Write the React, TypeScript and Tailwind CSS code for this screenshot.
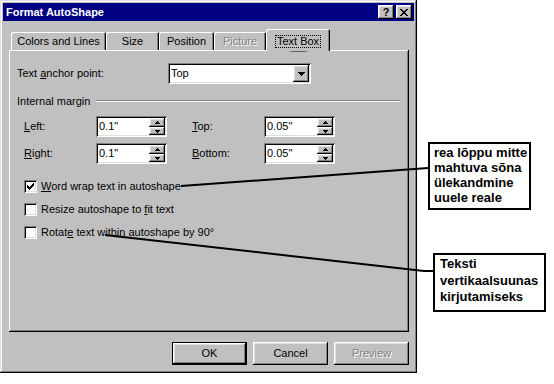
import React from "react";

const frame =
  "shadow-[inset_-1px_-1px_#000,inset_1px_1px_#dfdfdf,inset_-2px_-2px_#808080,inset_2px_2px_#fff]";
const raised =
  "shadow-[inset_-1px_-1px_#000,inset_1px_1px_#fff,inset_-2px_-2px_#808080,inset_2px_2px_#dfdfdf]";
const sunken =
  "shadow-[inset_1px_1px_#808080,inset_-1px_-1px_#fff,inset_2px_2px_#000,inset_-2px_-2px_#dfdfdf]";
const pane = "shadow-[inset_-1px_-1px_#000,inset_1px_1px_#fff,inset_-2px_-2px_#808080]";
const tabShadow =
  "shadow-[inset_1px_1px_#fff,inset_-1px_0_#000,inset_-2px_0_#808080]";

function TitleBtn({ children }: { children: React.ReactNode }) {
  return (
    <div className={`w-[16px] h-[14px] bg-[#c0c0c0] flex items-center justify-center ${raised}`}>
      {children}
    </div>
  );
}

function Tab({
  label,
  w,
  disabled,
}: {
  label: string;
  w: string;
  disabled?: boolean;
}) {
  return (
    <div
      className={`${w} h-[18px] bg-[#c0c0c0] rounded-t-[2px] flex items-center justify-center leading-[13px] ${tabShadow} ${
        disabled ? "text-[#808080] [text-shadow:1px_1px_0_#fff]" : ""
      }`}
    >
      {label}
    </div>
  );
}

function Arrow({ dir }: { dir: "up" | "down" }) {
  return (
    <svg width="5" height="3" viewBox="0 0 5 3" shapeRendering="crispEdges">
      {dir === "up" ? (
        <path d="M2 0h1v1h-1z M1 1h3v1h-3z M0 2h5v1h-5z" fill="#000" />
      ) : (
        <path d="M0 0h5v1h-5z M1 1h3v1h-3z M2 2h1v1h-1z" fill="#000" />
      )}
    </svg>
  );
}

function Spin({ value }: { value: string }) {
  return (
    <div className={`w-[71px] h-[21px] bg-white p-[2px] flex ${sunken}`}>
      <div className="flex-1 pl-[1px] flex items-center leading-[13px]">{value}</div>
      <div className="w-[16px] flex flex-col">
        <div className={`h-[9px] bg-[#c0c0c0] flex items-center justify-center ${raised}`}>
          <Arrow dir="up" />
        </div>
        <div className={`h-[8px] bg-[#c0c0c0] flex items-center justify-center ${raised}`}>
          <Arrow dir="down" />
        </div>
      </div>
    </div>
  );
}

function Check({ checked }: { checked?: boolean }) {
  return (
    <div className={`w-[13px] h-[13px] bg-white flex items-center justify-center ${sunken}`}>
      {checked && (
        <svg width="7" height="7" viewBox="0 0 7 7" shapeRendering="crispEdges">
          <path
            d="M6 0h1v1h-1z M5 1h2v1h-2z M0 2h1v1h-1z M4 2h3v1h-3z M0 3h2v1h-2z M3 3h3v1h-3z M0 4h5v1h-5z M1 5h3v1h-3z M2 6h1v1h-1z"
            fill="#000"
          />
        </svg>
      )}
    </div>
  );
}

function CheckRow({ checked, children }: { checked?: boolean; children: React.ReactNode }) {
  return (
    <div className="h-[16px] flex items-center">
      <Check checked={checked} />
      <span className="ml-[4px] leading-[13px]">{children}</span>
    </div>
  );
}

function Dialog() {
  return (
    <div className={`w-[417px] h-[373px] bg-[#c0c0c0] p-[3px] flex flex-col ${frame}`}>
      <div className="h-[18px] bg-[#000080] flex items-center justify-between pl-[3px] pr-[2px]">
        <span className="text-white font-bold text-[11px] leading-none">Format AutoShape</span>
        <div className="flex gap-[2px]">
          <TitleBtn>
            <span className="font-bold text-[11px] leading-none">?</span>
          </TitleBtn>
          <TitleBtn>
            <svg width="8" height="7" viewBox="0 0 8 7" shapeRendering="crispEdges">
              <path
                d="M0 0h2v1h-2z M6 0h2v1h-2z M1 1h2v1h-2z M5 1h2v1h-2z M2 2h4v1h-4z M3 3h2v1h-2z M2 4h4v1h-4z M1 5h2v1h-2z M5 5h2v1h-2z M0 6h2v1h-2z M6 6h2v1h-2z"
                fill="#000"
              />
            </svg>
          </TitleBtn>
        </div>
      </div>

      <div className="mt-[8px] ml-[8px] h-[21px] flex items-end relative z-10">
        <Tab label="Colors and Lines" w="w-[95px]" />
        <Tab label="Size" w="w-[53px]" />
        <Tab label="Position" w="w-[55px]" />
        <Tab label="Picture" w="w-[52px]" disabled />
        <div
          className={`w-[64px] h-[22px] -mb-[1px] bg-[#c0c0c0] rounded-t-[2px] flex justify-center items-center pt-[6px] pb-[4px] ${tabShadow}`}
        >
          <span className="border border-dotted border-black px-[1px] leading-[11px]">Text Box</span>
        </div>
      </div>

      <div className={`w-[400px] h-[282px] ml-[6px] bg-[#c0c0c0] pt-[13px] pl-[8px] ${pane}`}>
        <div className="flex items-center h-[21px]">
          <div className="w-[151px]">
            Text <span className="underline">a</span>nchor point:
          </div>
          <div className={`w-[143px] h-[21px] bg-white p-[2px] flex ${sunken}`}>
            <div className="flex-1 pl-[1px] flex items-center leading-[13px]">Top</div>
            <div className={`w-[16px] h-[17px] bg-[#c0c0c0] flex items-center justify-center ${raised}`}>
              <svg width="7" height="4" viewBox="0 0 7 4" shapeRendering="crispEdges">
                <path d="M0 0h7v1h-7z M1 1h5v1h-5z M2 2h3v1h-3z M3 3h1v1h-1z" fill="#000" />
              </svg>
            </div>
          </div>
        </div>

        <div className="mt-[10px] h-[14px] w-[383px] flex items-center">
          <span className="leading-[13px]">Internal margin</span>
          <div className="flex-1 ml-[6px] h-[2px] border-t border-b border-t-[#808080] border-b-white" />
        </div>

        <div className="mt-[8px] h-[21px] flex items-center pl-[7px]">
          <div className="w-[72px]">
            <span className="underline">L</span>eft:
          </div>
          <Spin value={'0.1"'} />
          <div className="w-[72px] ml-[25px]">
            <span className="underline">T</span>op:
          </div>
          <Spin value={'0.05"'} />
        </div>

        <div className="mt-[6px] h-[21px] flex items-center pl-[7px]">
          <div className="w-[72px]">
            <span className="underline">R</span>ight:
          </div>
          <Spin value={'0.1"'} />
          <div className="w-[72px] ml-[25px]">
            <span className="underline">B</span>ottom:
          </div>
          <Spin value={'0.05"'} />
        </div>

        <div className="mt-[14px] pl-[7px] flex flex-col gap-[7px]">
          <CheckRow checked>
            <span className="underline">W</span>ord wrap text in autoshape
          </CheckRow>
          <CheckRow>
            Resize autoshape to <span className="underline">f</span>it text
          </CheckRow>
          <CheckRow>
            Rotat<span className="underline">e</span> text within autoshape by 90°
          </CheckRow>
        </div>
      </div>

      <div className="mt-[10px] ml-[6px] w-[400px] flex justify-end gap-[6px]">
        <div className="w-[75px] h-[23px] border border-black">
          <div className={`w-full h-full flex items-center justify-center ${raised}`}>OK</div>
        </div>
        <div className={`w-[75px] h-[23px] flex items-center justify-center ${raised}`}>Cancel</div>
        <div
          className={`w-[75px] h-[23px] flex items-center justify-center text-[#808080] [text-shadow:1px_1px_0_#fff] ${raised}`}
        >
          Preview
        </div>
      </div>
    </div>
  );
}

export default function App() {
  return (
    <div className="relative w-[554px] h-[384px] bg-white overflow-hidden text-[11px] text-black font-['Liberation_Sans',Arial,sans-serif]">
      <Dialog />
      <svg className="absolute left-0 top-0 pointer-events-none" width="554" height="384" viewBox="0 0 554 384">
        <ellipse cx="298.5" cy="41" rx="30.5" ry="9.5" fill="none" stroke="#000" strokeWidth="2" />
        <line x1="181" y1="186" x2="428" y2="168" stroke="#000" strokeWidth="2" />
        <polyline points="105,235 424,271 433,271" fill="none" stroke="#000" strokeWidth="2" />
      </svg>
      <div className="absolute left-[428px] top-[142px] w-[103px] h-[68px] border-2 border-black bg-white pl-[4px] pt-[1px] font-bold text-[13px] leading-[15px]">
        rea lõppu mitte
        <br />
        mahtuva sõna
        <br />
        ülekandmine
        <br />
        uuele reale
      </div>
      <div className="absolute left-[433px] top-[253px] w-[113px] h-[59px] border-2 border-black bg-white pl-[5px] pt-[1px] font-bold text-[13px] leading-[16.5px]">
        Teksti
        <br />
        vertikaalsuunas
        <br />
        kirjutamiseks
      </div>
    </div>
  );
}
